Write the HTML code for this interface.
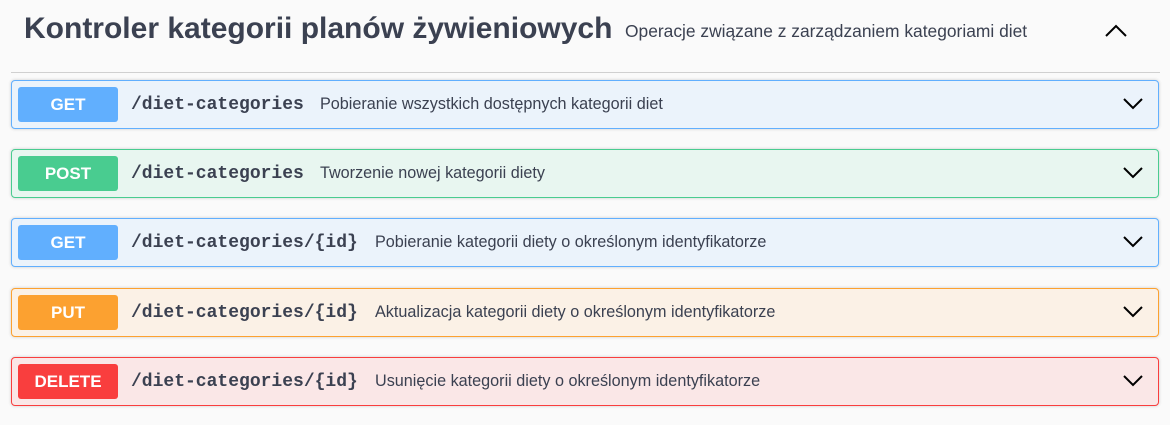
<!DOCTYPE html>
<html><head><meta charset="utf-8"><style>
body{margin:0;background:#fafafa;font-family:"Liberation Sans",sans-serif;width:1170px;height:425px;overflow:hidden;position:relative}
.h{position:absolute;left:24px;top:12px;font-size:30px;font-weight:bold;color:#3b4151;white-space:nowrap}
.sub{position:absolute;left:625px;top:21px;font-size:17.4px;color:#3b4151;white-space:nowrap}
.line{position:absolute;left:11px;top:72px;width:1149px;height:1px;background:#d0d0d0}
.op{position:absolute;left:11px;width:1146px;height:47px;border:1px solid;border-radius:4px;box-shadow:0 0 3px rgba(0,0,0,.19)}
.b{position:absolute;left:6px;top:6px;width:100px;height:35px;border-radius:3px;color:#fff;font-weight:bold;font-size:17px;text-align:center;line-height:35px}
.p{position:absolute;left:119px;top:14px;font-family:"Liberation Mono",monospace;font-weight:bold;font-size:18px;color:#3b4151}
.d{position:absolute;top:14px;font-size:16.2px;color:#3b4151;white-space:nowrap}
.c{position:absolute;right:14px;top:16px}
</style></head><body>
<div class="h">Kontroler kategorii planów żywieniowych</div>
<div class="sub">Operacje związane z zarządzaniem kategoriami diet</div>
<svg style="position:absolute;left:1104px;top:24px" width="24" height="14"><path d="M2 12L12 2L22 12" fill="none" stroke="#000" stroke-width="2"/></svg>
<div class="line"></div>

<div class="op" style="top:80px;background:#ebf3fb;border-color:#61affe"><div class="b" style="background:#61affe">GET</div><div class="p">/diet-categories</div><div class="d" style="left:308px">Pobieranie wszystkich dostępnych kategorii diet</div><svg class="c" width="22" height="14"><path d="M2 2L11 11L20 2" fill="none" stroke="#000" stroke-width="2"/></svg></div>

<div class="op" style="top:149px;background:#e8f6f0;border-color:#49cc90"><div class="b" style="background:#49cc90">POST</div><div class="p">/diet-categories</div><div class="d" style="left:308px">Tworzenie nowej kategorii diety</div><svg class="c" width="22" height="14"><path d="M2 2L11 11L20 2" fill="none" stroke="#000" stroke-width="2"/></svg></div>

<div class="op" style="top:218px;background:#ebf3fb;border-color:#61affe"><div class="b" style="background:#61affe">GET</div><div class="p">/diet-categories/{id}</div><div class="d" style="left:363px">Pobieranie kategorii diety o określonym identyfikatorze</div><svg class="c" width="22" height="14"><path d="M2 2L11 11L20 2" fill="none" stroke="#000" stroke-width="2"/></svg></div>

<div class="op" style="top:288px;background:#fbf1e6;border-color:#fca130"><div class="b" style="background:#fca130">PUT</div><div class="p">/diet-categories/{id}</div><div class="d" style="left:363px">Aktualizacja kategorii diety o określonym identyfikatorze</div><svg class="c" width="22" height="14"><path d="M2 2L11 11L20 2" fill="none" stroke="#000" stroke-width="2"/></svg></div>

<div class="op" style="top:357px;background:#fae7e7;border-color:#f93e3e"><div class="b" style="background:#f93e3e">DELETE</div><div class="p">/diet-categories/{id}</div><div class="d" style="left:363px">Usunięcie kategorii diety o określonym identyfikatorze</div><svg class="c" width="22" height="14"><path d="M2 2L11 11L20 2" fill="none" stroke="#000" stroke-width="2"/></svg></div>
</body></html>
